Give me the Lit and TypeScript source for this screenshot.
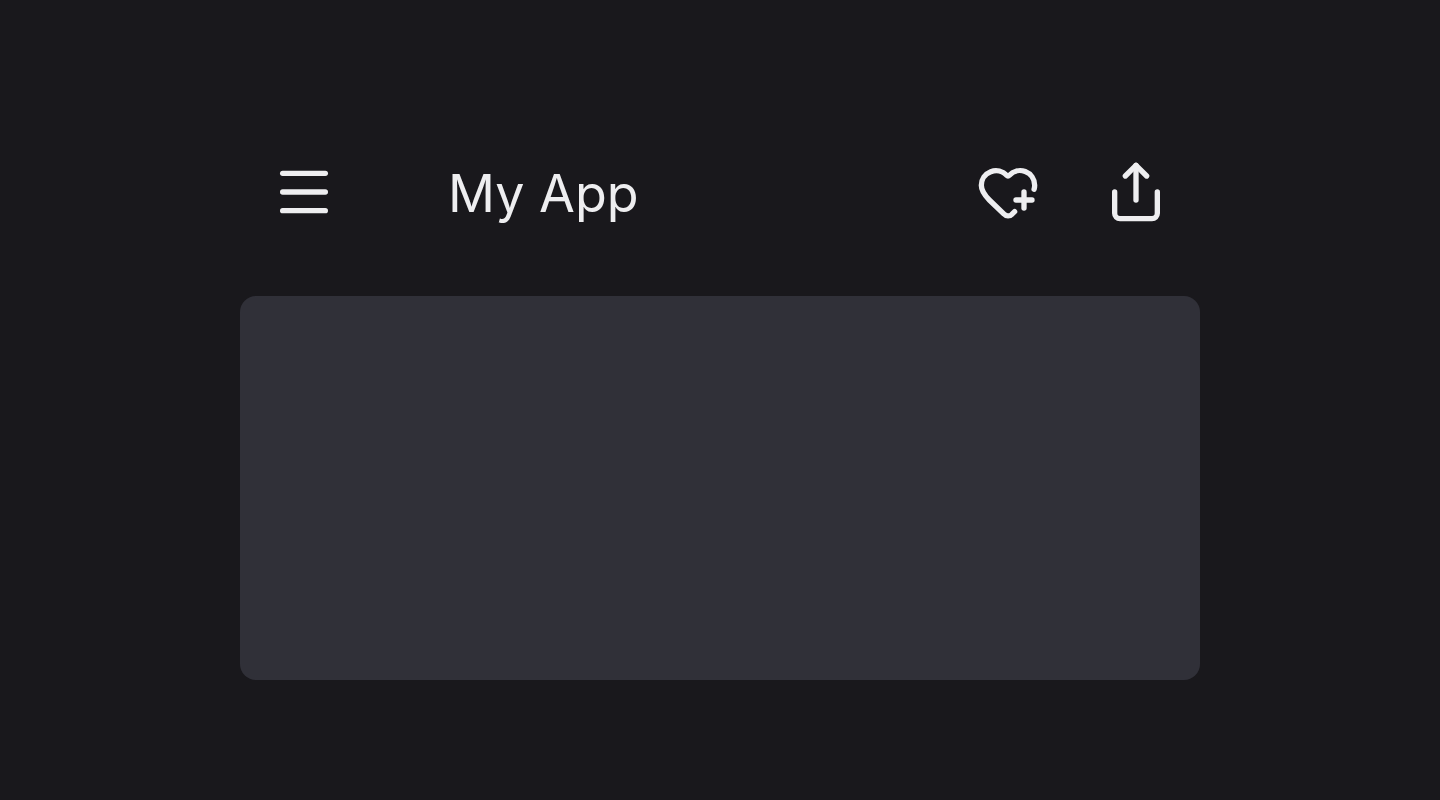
import { LitElement, css, html } from "lit";
import { customElement } from "lit/decorators.js";

@customElement("app-root")
export class AppRoot extends LitElement {
  static styles = css`
    :host {
      display: flex;
      align-items: center;
      justify-content: center;
      box-sizing: border-box;
      min-height: 100vh;
      padding: 24px;
      background: #19181c;
      color: #eeeef0;
      font-family: Inter, "Liberation Sans", sans-serif;
    }

    .shell {
      display: flex;
      flex-direction: column;
      gap: 32px;
      width: 100%;
      max-width: 960px;
    }

    .bar {
      display: flex;
      align-items: center;
      gap: 64px;
      padding: 40px 32px;
    }

    .title {
      flex: 1;
      margin: 0 0 0 48px;
      padding-top: 4px;
      font-size: 52px;
      font-weight: 400;
      line-height: 60px;
    }

    .action {
      display: block;
      padding: 0;
      border: 0;
      border-radius: 8px;
      background: none;
      color: inherit;
      cursor: pointer;
    }

    .icon {
      display: block;
      width: 64px;
      height: 64px;
      fill: none;
      stroke: currentColor;
      stroke-width: 2;
      stroke-linecap: round;
      stroke-linejoin: round;
    }

    .content {
      height: 48vh;
      border-radius: 16px;
      background: #303038;
    }
  `;

  render() {
    return html`
      <div class="shell">
        <header class="bar">
          <button class="action" type="button" aria-label="Menu">
            <svg class="icon" viewBox="0 0 24 24" aria-hidden="true">
              <path d="M4 5h16" />
              <path d="M4 12h16" />
              <path d="M4 19h16" />
            </svg>
          </button>
          <h1 class="title">My App</h1>
          <button class="action" type="button" aria-label="Add to favourites">
            <svg class="icon" viewBox="0 0 24 24" aria-hidden="true">
              <path
                d="m14.479 19.374-.971.939a2 2 0 0 1-3-.019L5 15c-1.5-1.5-3-3.2-3-5.5a5.5 5.5 0 0 1 9.591-3.676.56.56 0 0 0 .818 0A5.49 5.49 0 0 1 22 9.5a5.2 5.2 0 0 1-.219 1.49"
              />
              <path d="M15 15h6" />
              <path d="M18 12v6" />
            </svg>
          </button>
          <button class="action" type="button" aria-label="Share">
            <svg class="icon" viewBox="0 0 24 24" aria-hidden="true">
              <path d="M12 2v13" />
              <path d="m16 6-4-4-4 4" />
              <path d="M4 12v8a2 2 0 0 0 2 2h12a2 2 0 0 0 2-2v-8" />
            </svg>
          </button>
        </header>
        <main class="content"></main>
      </div>
    `;
  }
}
